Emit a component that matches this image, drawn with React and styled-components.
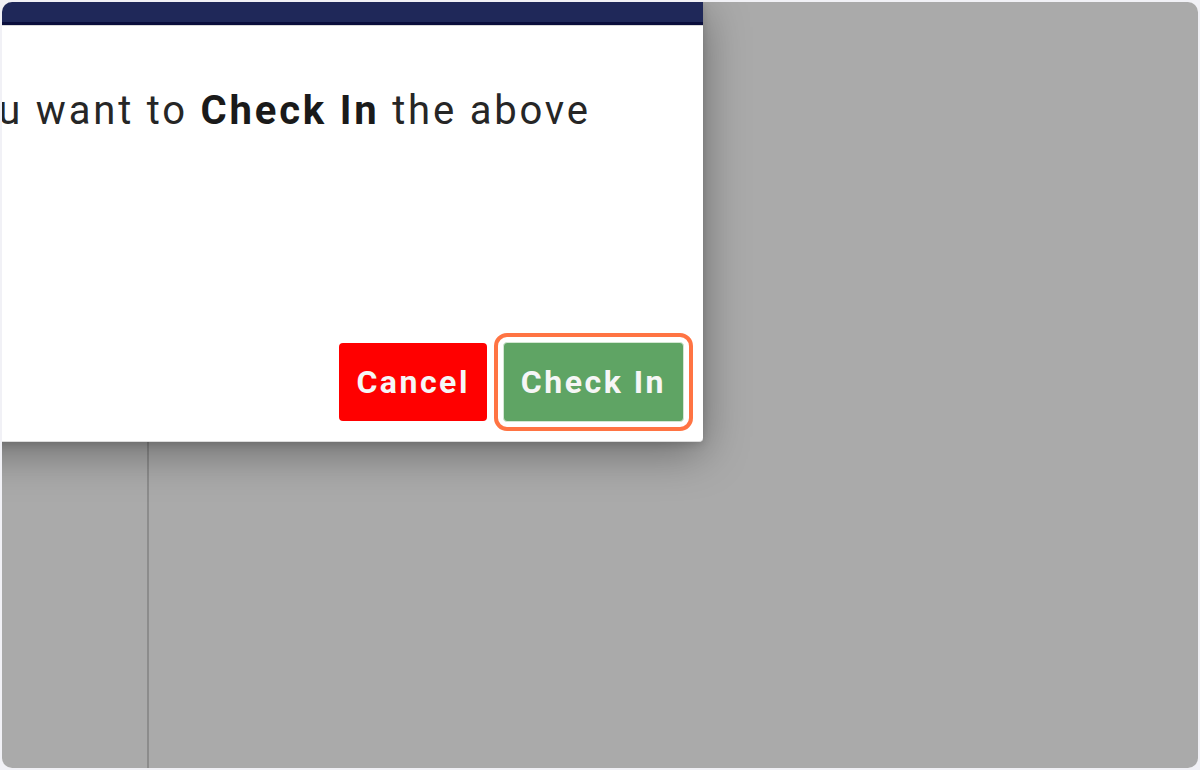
import React from 'react';
import styled, { createGlobalStyle } from 'styled-components';

const GlobalStyle = createGlobalStyle`
  html, body {
    margin: 0;
    padding: 0;
    background: #f1f1f6;
    font-family: Roboto, "Liberation Sans", Arial, sans-serif;
  }
  * {
    box-sizing: border-box;
  }
`;

const Frame = styled.div`
  position: relative;
  margin: 2px;
  height: 766px;
  border-radius: 10px;
  overflow: hidden;
  background: #ffffff;
`;

const Page = styled.div`
  display: flex;
  height: 100%;
`;

const Sidebar = styled.aside`
  width: 147px;
  flex-shrink: 0;
  border-right: 2px solid #d2d2d2;
  background: #ffffff;
`;

const Main = styled.main`
  flex: 1;
  background: #ffffff;
`;

const Backdrop = styled.div`
  position: absolute;
  inset: 0;
  background: rgba(0, 0, 0, 0.333);
`;

const Dialog = styled.div`
  position: absolute;
  top: 0;
  left: -330px;
  width: 1031px;
  height: 440px;
  display: flex;
  flex-direction: column;
  background: #ffffff;
  border-bottom: 1px solid #dcdcdc;
  border-radius: 0 0 4px 4px;
  box-shadow: 0 10px 45px rgba(0, 0, 0, 0.38), 0 2px 8px rgba(0, 0, 0, 0.15);
`;

const DialogHeader = styled.div`
  height: 23px;
  flex-shrink: 0;
  background: #1f2859;
  border-bottom: 3px solid #0a0e3c;
  box-shadow: 0 1px 0 #d9d9d9;
`;

const DialogBody = styled.div`
  padding: 62px 0 0 12px;
`;

const Message = styled.p`
  margin: 0;
  font-size: 40px;
  line-height: 1.2;
  letter-spacing: 2.8px;
  color: #262626;
  white-space: nowrap;

  strong {
    font-weight: 700;
    color: #1a1a1a;
  }
`;

const Actions = styled.div`
  margin-top: auto;
  display: flex;
  justify-content: flex-end;
  align-items: center;
  gap: 16px;
  padding: 0 19px 19px;
`;

const Button = styled.button`
  font-family: Roboto, "Liberation Sans", Arial, sans-serif;
  font-size: 32px;
  font-weight: 700;
  letter-spacing: 2.5px;
  color: #f6f6f6;
  height: ${p => (p.$primary ? '80px' : '78px')};
  padding: 0 17px;
  border-radius: 4px;
  cursor: pointer;
  background: ${p => (p.$primary ? '#5fa464' : '#ff0000')};
  border: ${p => (p.$primary ? '1px solid #d3e7d3' : 'none')};
  outline: ${p => (p.$primary ? '4px solid #ff7443' : 'none')};
  outline-offset: 5px;
`;

export default function App() {
  return (
    <>
      <GlobalStyle />
      <Frame>
        <Page>
          <Sidebar />
          <Main />
        </Page>
        <Backdrop />
        <Dialog role="dialog">
          <DialogHeader />
          <DialogBody>
            <Message>
              Are you sure you want to <strong>Check In</strong> the above
            </Message>
          </DialogBody>
          <Actions>
            <Button>Cancel</Button>
            <Button $primary>Check In</Button>
          </Actions>
        </Dialog>
      </Frame>
    </>
  );
}
